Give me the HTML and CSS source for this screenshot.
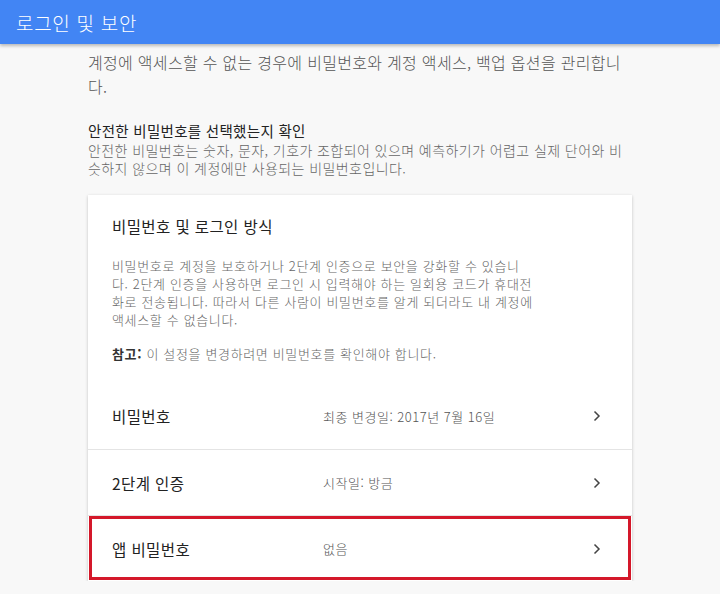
FILE: index.html
```html
<!DOCTYPE html>
<html lang="ko">
<head>
    <meta charset="UTF-8">
    <meta name="viewport" content="width=device-width, initial-scale=1.0">
    <title>로그인 및 보안</title>
    <link rel="stylesheet" href="styles.css">
</head>
<body>
    <header class="topbar">
        <h1>로그인 및 보안</h1>
    </header>

    <main class="content">
        <p class="intro">계정에 액세스할 수 없는 경우에 비밀번호와 계정 액세스, 백업 옵션을 관리합니다.</p>

        <h2 class="tip-title">안전한 비밀번호를 선택했는지 확인</h2>
        <p class="tip-text">안전한 비밀번호는 숫자, 문자, 기호가 조합되어 있으며 예측하기가 어렵고 실제 단어와 비슷하지 않으며 이 계정에만 사용되는 비밀번호입니다.</p>

        <section class="card">
            <div class="card-head">
                <h3>비밀번호 및 로그인 방식</h3>
                <p>비밀번호로 계정을 보호하거나 2단계 인증으로 보안을 강화할 수 있습니다. 2단계 인증을 사용하면 로그인 시 입력해야 하는 일회용 코드가 휴대전화로 전송됩니다. 따라서 다른 사람이 비밀번호를 알게 되더라도 내 계정에 액세스할 수 없습니다.</p>
                <p><b>참고:</b> 이 설정을 변경하려면 비밀번호를 확인해야 합니다.</p>
            </div>

            <a class="row" href="#">
                <span class="row-label">비밀번호</span>
                <span class="row-value">최종 변경일: 2017년 7월 16일</span>
                <svg class="chevron" viewBox="0 0 8 12" width="8" height="12"><path d="M1.5 1.5 6 6l-4.5 4.5" fill="none" stroke="#444" stroke-width="1.5"/></svg>
            </a>
            <a class="row" href="#">
                <span class="row-label">2단계 인증</span>
                <span class="row-value">시작일: 방금</span>
                <svg class="chevron" viewBox="0 0 8 12" width="8" height="12"><path d="M1.5 1.5 6 6l-4.5 4.5" fill="none" stroke="#444" stroke-width="1.5"/></svg>
            </a>
            <a class="row marked" href="#">
                <span class="row-label">앱 비밀번호</span>
                <span class="row-value">없음</span>
                <svg class="chevron" viewBox="0 0 8 12" width="8" height="12"><path d="M1.5 1.5 6 6l-4.5 4.5" fill="none" stroke="#444" stroke-width="1.5"/></svg>
            </a>
        </section>
    </main>
</body>
</html>
```

FILE: styles.css
```css
body { margin: 0; background-color: #f8f8f8; color: #222; font-family: "Noto Sans CJK KR", "Noto Sans", sans-serif; font-weight: 300; }

.topbar { height: 44px; background-color: #4285f4; box-shadow: 0 2px 3px rgba(0, 0, 0, 0.25); display: flex; align-items: center; padding-left: 16px; }
.topbar h1 { margin: 0; font-size: 19px; font-weight: 300; letter-spacing: 0.7px; color: #fff; line-height: 1; }

.content { width: 544px; margin-left: 88px; padding-top: 6px; }
.intro { margin: 0; font-size: 16px; line-height: 24px; letter-spacing: 0.3px; color: #555; }
.tip-title { margin: 23px 0 0; font-size: 14.5px; font-weight: 400; line-height: 20px; letter-spacing: 0.3px; color: #222; }
.tip-text { margin: 0; font-size: 14px; line-height: 18px; letter-spacing: 0.42px; color: #666; }

.card { margin-top: 18px; background-color: #fff; box-shadow: 0 1px 3px rgba(0, 0, 0, 0.22); }
.card-head { padding: 20px 24px 20px; }
.card-head h3 { margin: 0; font-size: 15.5px; font-weight: 400; line-height: 22px; letter-spacing: 0.4px; color: #222; }
.card-head p { margin: 16px 0 0; max-width: 423px; font-size: 13px; line-height: 18px; letter-spacing: 0.65px; color: #666; }
.card-head p:first-of-type { margin-top: 20px; }
.card-head b { font-weight: 700; color: #333; }

.row { box-sizing: border-box; display: flex; align-items: center; height: 66px; padding: 0 31px 0 24px; border-top: 1px solid #e4e4e4; text-decoration: none; }
.row:first-of-type { border-top: none; }
.row-label { width: 211px; font-size: 15.5px; font-weight: 400; letter-spacing: 0.4px; color: #222; }
.row-value { flex: 1; font-size: 13px; letter-spacing: 0.5px; color: #555; }
.chevron { display: block; }
.row.marked { outline: 3px solid #d4182a; outline-offset: -4px; }
```
